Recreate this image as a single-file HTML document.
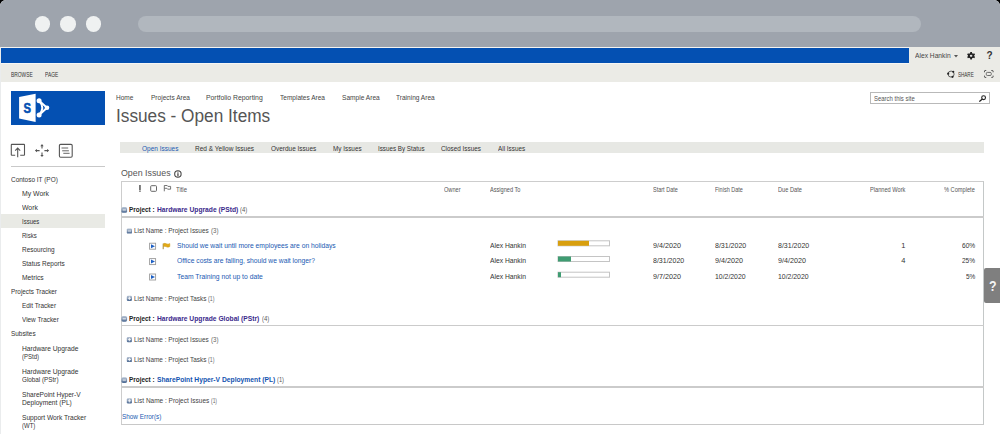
<!DOCTYPE html>
<html><head><meta charset="utf-8">
<style>
*{margin:0;padding:0;box-sizing:border-box}
html,body{width:1000px;height:434px;overflow:hidden;background:#000}
body{font-family:"Liberation Sans",sans-serif;color:#444;position:relative}
.a{position:absolute;white-space:nowrap}
.b{position:absolute}
svg{position:absolute;overflow:visible}
#frame{position:absolute;left:0;top:0;width:1000px;height:434px;background:#fff;border-radius:6px 6px 0 0;overflow:hidden}
</style></head><body>
<div id="frame">
  <!-- browser chrome -->
  <div class="b" style="left:0;top:0;width:1000px;height:46.5px;background:#9ea4ad"></div>
  <div class="b" style="left:34.7px;top:16.3px;width:15.5px;height:15.5px;border-radius:50%;background:#eff1f1"></div>
  <div class="b" style="left:60.2px;top:16.3px;width:15.5px;height:15.5px;border-radius:50%;background:#eff1f1"></div>
  <div class="b" style="left:85.7px;top:16.3px;width:15.5px;height:15.5px;border-radius:50%;background:#eff1f1"></div>
  <div class="b" style="left:137.8px;top:15.6px;width:783.5px;height:16.6px;border-radius:8.3px;background:#b1b7be"></div>
  <!-- suite bar -->
  <div class="b" style="left:0;top:46.5px;width:1000px;height:35px;background:#ebebe6"></div>
  <div class="b" style="left:0;top:47px;width:909px;height:1px;background:#f4f4f2"></div>
  <div class="b" style="left:1px;top:48px;width:908px;height:15px;background:#0450b2"></div>
  <div class="b" style="left:0;top:63px;width:909px;height:1px;background:#f6f6f4"></div>
  <div class="b" style="left:0;top:47px;width:1px;height:387px;background:#eaeced"></div>
  <!-- caret -->
  <svg style="left:953.5px;top:55px" width="4" height="3"><path d="M0 0 L4 0 L2 2.5 Z" fill="#555"/></svg>
  <!-- gear -->
  <svg style="left:967px;top:51.6px" width="8.2" height="7.6" viewBox="-8.2 -7.6 16.4 15.2"><path d="M-1.6-7.4 L1.6-7.4 L2.1-5 L4.2-3.9 L6.3-4.9 L7.9-2.1 L6.1-0.5 L6.1 0.6 L7.9 2.2 L6.3 5 L4.2 4 L2.1 5.1 L1.6 7.5 L-1.6 7.5 L-2.1 5.1 L-4.2 4 L-6.3 5 L-7.9 2.2 L-6.1 0.6 L-6.1-0.5 L-7.9-2.1 L-6.3-4.9 L-4.2-3.9 L-2.1-5 Z" fill="#222"/><ellipse rx="2.6" ry="2.2" fill="#ddd"/></svg>
  <div class="a" style="left:986.6px;top:50.6px;font-size:10px;line-height:10px;font-weight:bold;color:#333">?</div>
  <!-- share icon -->
  <svg style="left:946.6px;top:70.4px" width="8.2" height="8.2" viewBox="0 0 16 16"><circle cx="8" cy="8" r="5.9" fill="none" stroke="#3a3a3a" stroke-width="1.5"/><circle cx="2.3" cy="7.2" r="2.1" fill="#222"/><circle cx="12.2" cy="3.4" r="2.1" fill="#222"/><circle cx="10.8" cy="13.4" r="2.1" fill="#222"/></svg>
  <!-- focus icon -->
  <svg style="left:984.3px;top:69.9px" width="9.6" height="7.9" viewBox="0 0 19.2 15.8"><path d="M1 4.5V2.2Q1 1 2.2 1H4.5M14.7 1H17Q18.2 1 18.2 2.2V4.5M18.2 11.3V13.6Q18.2 14.8 17 14.8H14.7M4.5 14.8H2.2Q1 14.8 1 13.6V11.3" fill="none" stroke="#444" stroke-width="1.9"/><rect x="4.6" y="4.8" width="10" height="6.2" rx="2.2" fill="none" stroke="#555" stroke-width="1.7"/></svg>

  <!-- logo -->
  <div class="b" style="left:11px;top:91.2px;width:94px;height:33.5px;background:#0450b2"></div>
  <svg style="left:11px;top:91px" width="94" height="34" viewBox="0 0 94 34">
    <path d="M28.1 9.8 L36 16.8 L28.1 23.9" fill="none" stroke="#fff" stroke-width="2"/>
    <path d="M28.1 9.8 Q34.5 16.8 28.1 23.9" fill="none" stroke="#fff" stroke-width="2"/>
    <circle cx="28.1" cy="9.8" r="2.5" fill="#fff"/><circle cx="36" cy="16.8" r="2.3" fill="#fff"/><circle cx="28.1" cy="23.9" r="2.5" fill="#fff"/>
    <path d="M8.1 6 L24.6 2.7 L24.6 31 L8.1 27.6 Z" fill="#fff"/>
    <text x="0" y="0" transform="translate(12.5 22.2) scale(0.76 1)" font-family="Liberation Sans" font-weight="bold" font-size="14.8" fill="#0450b2" stroke="#0450b2" stroke-width="0.6">S</text>
  </svg>

  <!-- search -->
  <div class="b" style="left:870.2px;top:91.5px;width:119.6px;height:12.3px;border:1px solid #b9b9b9;background:#fff"></div>
  <svg style="left:979.4px;top:94.8px" width="7.4" height="6.6" viewBox="0 0 14.8 13.2"><circle cx="9.2" cy="5.4" r="3.8" fill="none" stroke="#222" stroke-width="2.2"/><path d="M6.2 8.4 L1.4 12.4" stroke="#222" stroke-width="2.6" stroke-linecap="round"/></svg>

  <!-- left nav icons -->
  <svg style="left:0;top:0" width="1000" height="434">
    <g fill="none" stroke="#555" stroke-width="1.1">
      <path d="M15.2 155.2 H11.8 Q11.3 155.2 11.3 154.7 V144.9 Q11.3 144.4 11.8 144.4 H24 Q24.5 144.4 24.5 144.9 V154.7 Q24.5 155.2 24 155.2 H20.2"/>
      <path d="M17.7 157.2 V148.2 M15.2 150.6 L17.7 148.1 L20.2 150.6"/>
      <path d="M42 145.5 V148.6 M42 152.6 V156 M36 150.6 H39.6 M44.4 150.6 H48" stroke-width="1.1"/>
      <rect x="59.4" y="144.4" width="12.8" height="12.8" rx="1.2"/>
      <path d="M61.5 148 H68.2 M62.2 150.8 H68.9 M63.3 153.3 H69.6" stroke-width="0.9"/>
    </g>
    <g fill="#555">
      <path d="M40.3 146.3 L42 144.1 L43.7 146.3 Z M40.3 154.9 L42 157.1 L43.7 154.9 Z M37 148.9 L34.8 150.6 L37 152.3 Z M47 148.9 L49.2 150.6 L47 152.3 Z"/>
    </g>
  </svg>
  <div class="b" style="left:11px;top:166px;width:94px;height:1px;background:#c9c9c9"></div>
  <div class="b" style="left:1px;top:213.9px;width:104.1px;height:13.7px;background:#e9eae5"></div>

  <!-- tab bar -->
  <div class="b" style="left:120.4px;top:142px;width:863.6px;height:10.5px;background:#e7e8e4"></div>
  <!-- info icon -->
  <svg style="left:174.2px;top:169.8px" width="7.8" height="7.8" viewBox="0 0 16 16"><circle cx="8" cy="8" r="6.6" fill="none" stroke="#444" stroke-width="2.2"/><rect x="6.8" y="6.6" width="2.6" height="5.6" fill="#444"/><circle cx="8.1" cy="4.3" r="1.4" fill="#444"/></svg>

  <!-- table -->
  <div class="b" style="left:121px;top:181px;width:863px;height:244px;border:1px solid #cdcdcd;border-right-color:#c4c8c8;border-bottom-color:#c8c8c8"></div>
  <div class="b" style="left:122px;top:216.2px;width:862px;height:1.8px;background:#cbcbcb"></div>
  <div class="b" style="left:122px;top:324.6px;width:862px;height:1.8px;background:#cbcbcb"></div>
  <div class="b" style="left:122px;top:385.8px;width:862px;height:1.8px;background:#cbcbcb"></div>

  <svg style="left:0;top:0" width="1000" height="434">
    <!-- header icons -->
    <rect x="139.2" y="185" width="1.5" height="5" fill="#555"/><rect x="139.2" y="190.5" width="1.5" height="1.3" fill="#555"/>
    <rect x="150.7" y="185.7" width="5.8" height="5.6" rx="0.8" fill="none" stroke="#666" stroke-width="1"/>
    <path d="M164.3 191.3 V185.5 H167.2 L167.9 186.4 H170.6 V189.2 H167.6 L166.9 188.3 H164.3" fill="none" stroke="#666" stroke-width="0.9"/>
    <!-- group icons -->
    <defs>
      <linearGradient id="gi" x1="0" y1="0" x2="0" y2="1"><stop offset="0" stop-color="#b8c4d4"/><stop offset="1" stop-color="#4d6a93"/></linearGradient>
    </defs>
    <g>
      <rect x="121.4" y="207.1" width="5.7" height="5.7" rx="1.6" fill="url(#gi)"/><rect x="122.6" y="209.5" width="3.3" height="0.9" fill="#fff"/>
      <rect x="121.4" y="316" width="5.7" height="5.7" rx="1.6" fill="url(#gi)"/><rect x="122.6" y="318.4" width="3.3" height="0.9" fill="#fff"/>
      <rect x="121.4" y="377.2" width="5.7" height="5.7" rx="1.6" fill="url(#gi)"/><rect x="122.6" y="379.6" width="3.3" height="0.9" fill="#fff"/>
    </g>
    <g>
      <rect x="126.8" y="228.4" width="5.2" height="5.2" rx="1.2" fill="url(#gi)"/><rect x="127.8" y="230.6" width="3.2" height="0.8" fill="#fff"/>
      <rect x="126.8" y="295.7" width="5.2" height="5.2" rx="1.2" fill="url(#gi)"/><path d="M127.8 298.3 H131 M129.4 296.7 V299.9" stroke="#fff" stroke-width="0.8"/>
      <rect x="126.8" y="337" width="5.2" height="5.2" rx="1.2" fill="url(#gi)"/><path d="M127.8 339.6 H131 M129.4 338 V341.2" stroke="#fff" stroke-width="0.8"/>
      <rect x="126.8" y="356.9" width="5.2" height="5.2" rx="1.2" fill="url(#gi)"/><path d="M127.8 359.5 H131 M129.4 357.9 V361.1" stroke="#fff" stroke-width="0.8"/>
      <rect x="126.8" y="398.2" width="5.2" height="5.2" rx="1.2" fill="url(#gi)"/><path d="M127.8 400.8 H131 M129.4 399.2 V402.4" stroke="#fff" stroke-width="0.8"/>
    </g>
    <!-- row expand icons -->
    <g>
      <rect x="149.6" y="243.2" width="6" height="6" fill="#fff" stroke="#9a9a9a" stroke-width="0.9"/><path d="M151 244.2 L155 246.2 L151 248.2 Z" fill="#1d5fc4"/>
      <rect x="149.6" y="258.6" width="6" height="6" fill="#fff" stroke="#9a9a9a" stroke-width="0.9"/><path d="M151 259.6 L155 261.6 L151 263.6 Z" fill="#1d5fc4"/>
      <rect x="149.6" y="274" width="6" height="6" fill="#fff" stroke="#9a9a9a" stroke-width="0.9"/><path d="M151 275.0 L155 277.0 L151 279.0 Z" fill="#1d5fc4"/>
    </g>
    <!-- flag -->
    <path d="M163.2 249.2 V243.6" stroke="#9a7a20" stroke-width="0.9"/><path d="M163.6 243.6 Q165 242.9 166.4 243.8 Q168 244.6 169.8 243.6 V246.6 Q168 247.6 166.4 246.8 Q165 245.9 163.6 246.6 Z" fill="#e4aa14" stroke="#c99410" stroke-width="0.5"/>
    <!-- progress bars -->
    <g stroke="#c4c4c4" stroke-width="1" fill="#fff">
      <rect x="558" y="240.8" width="51.5" height="5"/>
      <rect x="558" y="256.5" width="51.5" height="5"/>
      <rect x="558" y="272.2" width="51.5" height="5"/>
    </g>
    <rect x="558" y="240.8" width="31" height="5" fill="#d89f0e"/>
    <rect x="558" y="256.5" width="13" height="5" fill="#3f9c72"/>
    <rect x="558" y="272.2" width="3" height="5" fill="#3f9c72"/>
  </svg>

  <!-- help tab -->
  <div class="b" style="left:984.2px;top:267.7px;width:16px;height:35.8px;background:#7f7f7f;border-radius:2px 0 0 2px"></div>
  <div class="a" style="left:989.3px;top:277.8px;font-size:15.5px;line-height:15.5px;font-weight:bold;color:#f4f4f4;transform:scaleX(0.8);transform-origin:0 0">?</div>

<div class="a" style="top:52.34px;font-size:7.4px;line-height:7.4px;color:#444;left:914.50px;transform:scaleX(0.9027);transform-origin:0 0;">Alex Hankin</div>
<div class="a" style="top:71.90px;font-size:6.5px;line-height:6.5px;color:#333;left:11.00px;transform:scaleX(0.7507);transform-origin:0 0;">BROWSE</div>
<div class="a" style="top:71.90px;font-size:6.5px;line-height:6.5px;color:#333;left:44.90px;transform:scaleX(0.7503);transform-origin:0 0;">PAGE</div>
<div class="a" style="top:71.27px;font-size:7px;line-height:7px;color:#333;left:957.60px;transform:scaleX(0.6508);transform-origin:0 0;">SHARE</div>
<div class="a" style="top:94.37px;font-size:7.6px;line-height:7.6px;color:#444;left:116.30px;transform:scaleX(0.8586);transform-origin:0 0;">Home</div>
<div class="a" style="top:94.37px;font-size:7.6px;line-height:7.6px;color:#444;left:150.50px;transform:scaleX(0.8634);transform-origin:0 0;">Projects Area</div>
<div class="a" style="top:94.37px;font-size:7.6px;line-height:7.6px;color:#444;left:206.20px;transform:scaleX(0.9013);transform-origin:0 0;">Portfolio Reporting</div>
<div class="a" style="top:94.37px;font-size:7.6px;line-height:7.6px;color:#444;left:279.90px;transform:scaleX(0.8597);transform-origin:0 0;">Templates Area</div>
<div class="a" style="top:94.37px;font-size:7.6px;line-height:7.6px;color:#444;left:341.60px;transform:scaleX(0.8693);transform-origin:0 0;">Sample Area</div>
<div class="a" style="top:94.37px;font-size:7.6px;line-height:7.6px;color:#444;left:395.90px;transform:scaleX(0.8621);transform-origin:0 0;">Training Area</div>
<div class="a" style="top:106.79px;font-size:18.8px;line-height:18.8px;color:#555;left:115.80px;transform:scaleX(0.9175);transform-origin:0 0;">Issues - Open Items</div>
<div class="a" style="top:95.94px;font-size:6.8px;line-height:6.8px;color:#555;left:873.50px;transform:scaleX(0.8759);transform-origin:0 0;">Search this site</div>
<div class="a" style="top:175.95px;font-size:7.5px;line-height:7.5px;color:#333;left:11.20px;transform:scaleX(0.8592);transform-origin:0 0;">Contoso IT (PO)</div>
<div class="a" style="top:190.05px;font-size:7.5px;line-height:7.5px;color:#333;left:21.60px;transform:scaleX(0.9167);transform-origin:0 0;">My Work</div>
<div class="a" style="top:204.05px;font-size:7.5px;line-height:7.5px;color:#333;left:21.60px;transform:scaleX(0.9151);transform-origin:0 0;">Work</div>
<div class="a" style="top:218.05px;font-size:7.5px;line-height:7.5px;color:#333;left:21.60px;transform:scaleX(0.7977);transform-origin:0 0;">Issues</div>
<div class="a" style="top:232.05px;font-size:7.5px;line-height:7.5px;color:#333;left:21.60px;transform:scaleX(0.8014);transform-origin:0 0;">Risks</div>
<div class="a" style="top:246.05px;font-size:7.5px;line-height:7.5px;color:#333;left:21.60px;transform:scaleX(0.8593);transform-origin:0 0;">Resourcing</div>
<div class="a" style="top:260.05px;font-size:7.5px;line-height:7.5px;color:#333;left:21.60px;transform:scaleX(0.8607);transform-origin:0 0;">Status Reports</div>
<div class="a" style="top:274.05px;font-size:7.5px;line-height:7.5px;color:#333;left:21.60px;transform:scaleX(0.8936);transform-origin:0 0;">Metrics</div>
<div class="a" style="top:288.25px;font-size:7.5px;line-height:7.5px;color:#333;left:11.10px;transform:scaleX(0.8489);transform-origin:0 0;">Projects Tracker</div>
<div class="a" style="top:302.25px;font-size:7.5px;line-height:7.5px;color:#333;left:21.70px;transform:scaleX(0.8497);transform-origin:0 0;">Edit Tracker</div>
<div class="a" style="top:316.35px;font-size:7.5px;line-height:7.5px;color:#333;left:21.70px;transform:scaleX(0.8515);transform-origin:0 0;">View Tracker</div>
<div class="a" style="top:330.45px;font-size:7.5px;line-height:7.5px;color:#333;left:11.10px;transform:scaleX(0.8547);transform-origin:0 0;">Subsites</div>
<div class="a" style="top:344.95px;font-size:7.5px;line-height:7.5px;color:#333;left:21.60px;transform:scaleX(0.8899);transform-origin:0 0;">Hardware Upgrade</div>
<div class="a" style="top:353.35px;font-size:7.5px;line-height:7.5px;color:#333;left:21.60px;transform:scaleX(0.7994);transform-origin:0 0;">(PStd)</div>
<div class="a" style="top:368.05px;font-size:7.5px;line-height:7.5px;color:#333;left:21.60px;transform:scaleX(0.8899);transform-origin:0 0;">Hardware Upgrade</div>
<div class="a" style="top:376.35px;font-size:7.5px;line-height:7.5px;color:#333;left:21.60px;transform:scaleX(0.8418);transform-origin:0 0;">Global (PStr)</div>
<div class="a" style="top:390.85px;font-size:7.5px;line-height:7.5px;color:#333;left:21.60px;transform:scaleX(0.8785);transform-origin:0 0;">SharePoint Hyper-V</div>
<div class="a" style="top:399.15px;font-size:7.5px;line-height:7.5px;color:#333;left:21.60px;transform:scaleX(0.8848);transform-origin:0 0;">Deployment (PL)</div>
<div class="a" style="top:413.65px;font-size:7.5px;line-height:7.5px;color:#333;left:21.60px;transform:scaleX(0.8817);transform-origin:0 0;">Support Work Tracker</div>
<div class="a" style="top:421.95px;font-size:7.5px;line-height:7.5px;color:#333;left:21.60px;transform:scaleX(0.7985);transform-origin:0 0;">(WT)</div>
<div class="a" style="top:145.01px;font-size:7.2px;line-height:7.2px;color:#2159b2;left:142.00px;transform:scaleX(0.9019);transform-origin:0 0;">Open Issues</div>
<div class="a" style="top:145.01px;font-size:7.2px;line-height:7.2px;color:#333;left:195.00px;transform:scaleX(0.9060);transform-origin:0 0;">Red &amp; Yellow Issues</div>
<div class="a" style="top:145.01px;font-size:7.2px;line-height:7.2px;color:#333;left:270.50px;transform:scaleX(0.8978);transform-origin:0 0;">Overdue Issues</div>
<div class="a" style="top:145.01px;font-size:7.2px;line-height:7.2px;color:#333;left:332.50px;transform:scaleX(0.8838);transform-origin:0 0;">My Issues</div>
<div class="a" style="top:145.01px;font-size:7.2px;line-height:7.2px;color:#333;left:378.20px;transform:scaleX(0.8705);transform-origin:0 0;">Issues By Status</div>
<div class="a" style="top:145.01px;font-size:7.2px;line-height:7.2px;color:#333;left:441.40px;transform:scaleX(0.8858);transform-origin:0 0;">Closed Issues</div>
<div class="a" style="top:145.01px;font-size:7.2px;line-height:7.2px;color:#333;left:497.90px;transform:scaleX(0.8841);transform-origin:0 0;">All Issues</div>
<div class="a" style="top:167.80px;font-size:9.8px;line-height:9.8px;color:#555;left:121.00px;transform:scaleX(0.9016);transform-origin:0 0;">Open Issues</div>
<div class="a" style="top:187.27px;font-size:6.3px;line-height:6.3px;color:#555;left:176.20px;transform:scaleX(0.9424);transform-origin:0 0;">Title</div>
<div class="a" style="top:187.27px;font-size:6.3px;line-height:6.3px;color:#555;left:444.00px;transform:scaleX(0.8896);transform-origin:0 0;">Owner</div>
<div class="a" style="top:187.27px;font-size:6.3px;line-height:6.3px;color:#555;left:490.00px;transform:scaleX(0.8917);transform-origin:0 0;">Assigned To</div>
<div class="a" style="top:187.27px;font-size:6.3px;line-height:6.3px;color:#555;left:653.00px;transform:scaleX(0.8745);transform-origin:0 0;">Start Date</div>
<div class="a" style="top:187.27px;font-size:6.3px;line-height:6.3px;color:#555;left:714.60px;transform:scaleX(0.8757);transform-origin:0 0;">Finish Date</div>
<div class="a" style="top:187.27px;font-size:6.3px;line-height:6.3px;color:#555;left:778.00px;transform:scaleX(0.8982);transform-origin:0 0;">Due Date</div>
<div class="a" style="top:187.27px;font-size:6.3px;line-height:6.3px;color:#555;left:869.90px;transform:scaleX(0.8976);transform-origin:0 0;">Planned Work</div>
<div class="a" style="top:187.27px;font-size:6.3px;line-height:6.3px;color:#555;left:943.60px;transform:scaleX(0.8976);transform-origin:0 0;">% Complete</div>
<div class="a" style="top:206.05px;font-size:7.5px;line-height:7.5px;color:#222;font-weight:bold;left:128.90px;transform:scaleX(0.8529);transform-origin:0 0;">Project :</div>
<div class="a" style="top:206.05px;font-size:7.5px;line-height:7.5px;color:#3b2a8c;font-weight:bold;left:156.70px;transform:scaleX(0.8948);transform-origin:0 0;">Hardware Upgrade (PStd)</div>
<div class="a" style="top:206.05px;font-size:7.5px;line-height:7.5px;color:#555;left:240.40px;transform:scaleX(0.7850);transform-origin:0 0;">(4)</div>
<div class="a" style="top:227.35px;font-size:7.5px;line-height:7.5px;color:#444;left:133.70px;transform:scaleX(0.8574);transform-origin:0 0;">List Name : Project Issues</div>
<div class="a" style="top:227.37px;font-size:7px;line-height:7px;color:#666;left:210.50px;transform:scaleX(0.8759);transform-origin:0 0;">(3)</div>
<div class="a" style="top:242.05px;font-size:7.5px;line-height:7.5px;color:#2159b2;left:176.80px;transform:scaleX(0.8978);transform-origin:0 0;">Should we wait until more employees are on holidays</div>
<div class="a" style="top:242.05px;font-size:7.5px;line-height:7.5px;color:#333;left:489.70px;transform:scaleX(0.8993);transform-origin:0 0;">Alex Hankin</div>
<div class="a" style="top:242.05px;font-size:7.5px;line-height:7.5px;color:#333;left:652.60px;transform:scaleX(0.9554);transform-origin:0 0;">9/4/2020</div>
<div class="a" style="top:242.05px;font-size:7.5px;line-height:7.5px;color:#333;left:714.60px;transform:scaleX(0.9348);transform-origin:0 0;">8/31/2020</div>
<div class="a" style="top:242.05px;font-size:7.5px;line-height:7.5px;color:#333;left:778.10px;transform:scaleX(0.9348);transform-origin:0 0;">8/31/2020</div>
<div class="a" style="top:242.05px;font-size:7.5px;line-height:7.5px;color:#333;right:94.70px;">1</div>
<div class="a" style="top:242.05px;font-size:7.5px;line-height:7.5px;color:#333;left:961.80px;transform:scaleX(0.8791);transform-origin:0 0;">60%</div>
<div class="a" style="top:257.45px;font-size:7.5px;line-height:7.5px;color:#2159b2;left:176.80px;transform:scaleX(0.8955);transform-origin:0 0;">Office costs are falling, should we wait longer?</div>
<div class="a" style="top:257.45px;font-size:7.5px;line-height:7.5px;color:#333;left:489.70px;transform:scaleX(0.8993);transform-origin:0 0;">Alex Hankin</div>
<div class="a" style="top:257.45px;font-size:7.5px;line-height:7.5px;color:#333;left:652.60px;transform:scaleX(0.9348);transform-origin:0 0;">8/31/2020</div>
<div class="a" style="top:257.45px;font-size:7.5px;line-height:7.5px;color:#333;left:714.60px;transform:scaleX(0.9554);transform-origin:0 0;">9/4/2020</div>
<div class="a" style="top:257.45px;font-size:7.5px;line-height:7.5px;color:#333;left:778.10px;transform:scaleX(0.9554);transform-origin:0 0;">9/4/2020</div>
<div class="a" style="top:257.45px;font-size:7.5px;line-height:7.5px;color:#333;right:94.70px;">4</div>
<div class="a" style="top:257.45px;font-size:7.5px;line-height:7.5px;color:#333;left:962.00px;transform:scaleX(0.8658);transform-origin:0 0;">25%</div>
<div class="a" style="top:272.85px;font-size:7.5px;line-height:7.5px;color:#2159b2;left:176.80px;transform:scaleX(0.9026);transform-origin:0 0;">Team Training not up to date</div>
<div class="a" style="top:272.85px;font-size:7.5px;line-height:7.5px;color:#333;left:489.70px;transform:scaleX(0.8993);transform-origin:0 0;">Alex Hankin</div>
<div class="a" style="top:272.85px;font-size:7.5px;line-height:7.5px;color:#333;left:652.60px;transform:scaleX(0.9554);transform-origin:0 0;">9/7/2020</div>
<div class="a" style="top:272.85px;font-size:7.5px;line-height:7.5px;color:#333;left:714.60px;transform:scaleX(0.9169);transform-origin:0 0;">10/2/2020</div>
<div class="a" style="top:272.85px;font-size:7.5px;line-height:7.5px;color:#333;left:778.10px;transform:scaleX(0.9169);transform-origin:0 0;">10/2/2020</div>
<div class="a" style="top:272.85px;font-size:7.5px;line-height:7.5px;color:#333;left:965.70px;transform:scaleX(0.8576);transform-origin:0 0;">5%</div>
<div class="a" style="top:294.65px;font-size:7.5px;line-height:7.5px;color:#444;left:133.70px;transform:scaleX(0.8570);transform-origin:0 0;">List Name : Project Tasks</div>
<div class="a" style="top:294.67px;font-size:7px;line-height:7px;color:#666;left:207.80px;transform:scaleX(0.7474);transform-origin:0 0;">(1)</div>
<div class="a" style="top:314.95px;font-size:7.5px;line-height:7.5px;color:#222;font-weight:bold;left:128.90px;transform:scaleX(0.8529);transform-origin:0 0;">Project :</div>
<div class="a" style="top:314.95px;font-size:7.5px;line-height:7.5px;color:#3b2a8c;font-weight:bold;left:156.70px;transform:scaleX(0.8926);transform-origin:0 0;">Hardware Upgrade Global (PStr)</div>
<div class="a" style="top:314.95px;font-size:7.5px;line-height:7.5px;color:#555;left:261.50px;transform:scaleX(0.7959);transform-origin:0 0;">(4)</div>
<div class="a" style="top:335.95px;font-size:7.5px;line-height:7.5px;color:#444;left:133.70px;transform:scaleX(0.8574);transform-origin:0 0;">List Name : Project Issues</div>
<div class="a" style="top:335.97px;font-size:7px;line-height:7px;color:#666;left:210.50px;transform:scaleX(0.8759);transform-origin:0 0;">(3)</div>
<div class="a" style="top:355.85px;font-size:7.5px;line-height:7.5px;color:#444;left:133.70px;transform:scaleX(0.8570);transform-origin:0 0;">List Name : Project Tasks</div>
<div class="a" style="top:355.87px;font-size:7px;line-height:7px;color:#666;left:207.80px;transform:scaleX(0.7474);transform-origin:0 0;">(1)</div>
<div class="a" style="top:376.15px;font-size:7.5px;line-height:7.5px;color:#222;font-weight:bold;left:128.90px;transform:scaleX(0.8529);transform-origin:0 0;">Project :</div>
<div class="a" style="top:376.15px;font-size:7.5px;line-height:7.5px;color:#1353b0;font-weight:bold;left:156.70px;transform:scaleX(0.8955);transform-origin:0 0;">SharePoint Hyper-V Deployment (PL)</div>
<div class="a" style="top:376.15px;font-size:7.5px;line-height:7.5px;color:#555;left:277.00px;transform:scaleX(0.7632);transform-origin:0 0;">(1)</div>
<div class="a" style="top:397.15px;font-size:7.5px;line-height:7.5px;color:#444;left:133.70px;transform:scaleX(0.8643);transform-origin:0 0;">List Name : Project Issues</div>
<div class="a" style="top:397.17px;font-size:7px;line-height:7px;color:#666;left:211.00px;transform:scaleX(0.7007);transform-origin:0 0;">(1)</div>
<div class="a" style="top:413.15px;font-size:7.5px;line-height:7.5px;color:#2159b2;left:121.60px;transform:scaleX(0.8516);transform-origin:0 0;">Show Error(s)</div>
</div>
</body></html>
